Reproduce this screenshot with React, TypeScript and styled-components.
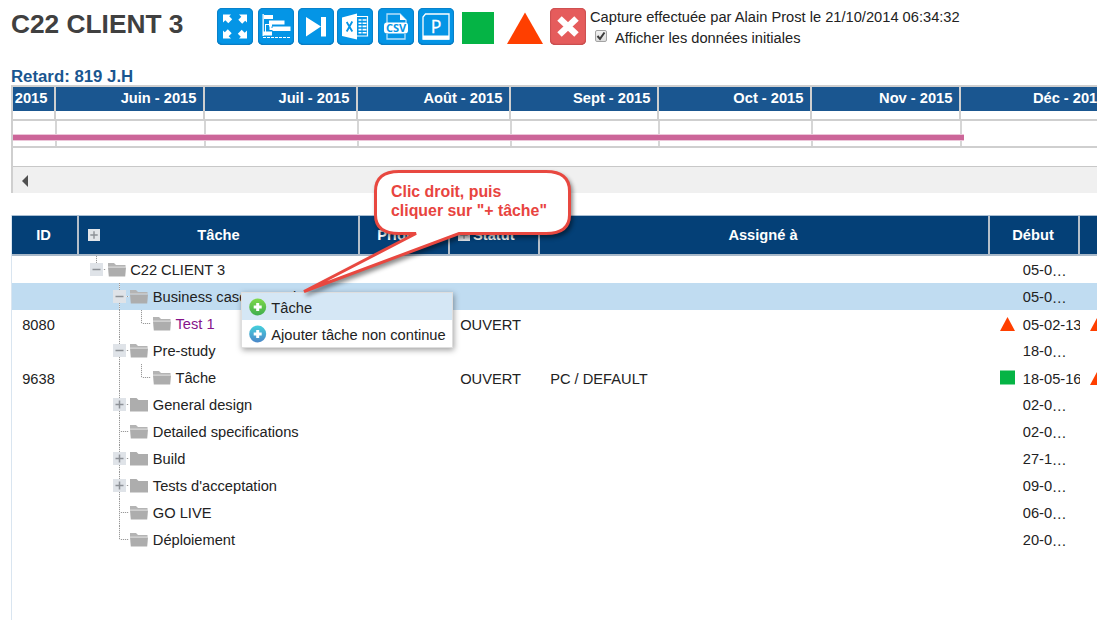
import React from 'react';
import styled, { createGlobalStyle, css } from 'styled-components';

const Global = createGlobalStyle`
  * { box-sizing: border-box; }
  html, body { margin: 0; background: #fff; overflow: hidden; }
  body { font: 14.67px "Liberation Sans", Arial, sans-serif; color: #222; }
`;

const Page = styled.main`
  position: relative;
  width: 1097px;
  height: 620px;
  overflow: hidden;
  padding-left: 11px;
`;

/* ---------- top bar ---------- */
const TopBar = styled.header`
  display: flex;
  height: 66px;
  padding-top: 8px;
`;
const Title = styled.h1`
  margin: 0;
  width: 206px;
  font-size: 26.3px;
  line-height: 32px;
  color: #404040;
  white-space: nowrap;
`;
const Toolbar = styled.div`
  display: flex;
`;
const ToolButton = styled.div<{ $gap?: number; $red?: boolean }>`
  width: 36px;
  height: 37px;
  margin-right: ${(p) => p.$gap ?? 4}px;
  border-radius: 5px;
  background: ${(p) => (p.$red ? '#e55c5c' : '#0495e6')};
  box-shadow: inset 0 0 1px 1px ${(p) => (p.$red ? '#cd4f50' : '#0a80c8')}, inset 0 -1px 1px ${(p) => (p.$red ? '#b84748' : '#0a6cae')};
  svg { display: block; }
`;
const Flag = styled.svg<{ $gap: number }>`
  display: block;
  margin-right: ${(p) => p.$gap}px;
`;
const Capture = styled.div`
  margin-left: 4px;
  white-space: nowrap;
`;
const CaptureLine = styled.div`
  line-height: 18px;
`;
const CheckLine = styled.label`
  display: flex;
  margin: 2px 0 0 5px;
  line-height: 20px;
`;
const CheckBox = styled.span`
  width: 12px;
  height: 12px;
  margin: 2px 8px 0 0;
  border: 1px solid #a3a3a3;
  border-radius: 2px;
  background: linear-gradient(#f2f2f2, #dcdcdc);
  svg { display: block; }
`;

/* ---------- timeline ---------- */
const Delay = styled.div`
  height: 19px;
  font-size: 16.8px;
  font-weight: bold;
  line-height: 22px;
  color: #1a5690;
`;
const Timeline = styled.section`
  position: relative;
  width: 1086px;
  border-left: 2px solid #cfcfcf;
  border-top: 2px solid #cfcfcf;
`;
const Months = styled.div`
  display: flex;
  height: 34px;
  overflow: hidden;
  border-bottom: 2px solid #cfcfcf;
`;
const Month = styled.div<{ $w: number }>`
  flex: 0 0 ${(p) => p.$w}px;
  border-right: 2px solid #cfcfcf;
  span {
    display: block;
    height: 24px;
    padding-right: 6.6px;
    background: #1a5690;
    color: #fff;
    font-weight: bold;
    line-height: 23px;
    text-align: right;
    white-space: nowrap;
  }
`;
const Lane = styled.div`
  display: flex;
  height: 27px;
  padding-left: 1px;
  overflow: hidden;
  border-bottom: 2px solid #cfcfcf;
`;
const LaneCell = styled.div<{ $w: number }>`
  flex: 0 0 ${(p) => p.$w}px;
  border-right: 2px solid #d6d6d6;
`;
const DelayBar = styled.div`
  position: absolute;
  left: 0;
  top: 47px;
  width: 951px;
  height: 7px;
  border: solid #ecc6d9;
  border-width: 1px 0;
  background: #cc6699;
`;
const Spacer = styled.div`
  height: 18px;
`;
const ScrollTrack = styled.div`
  height: 27px;
  padding: 8px 0 0 9px;
  border-top: 1px solid #c8c8c8;
  background: #f0f0f0;
  svg { display: block; }
`;

/* ---------- task grid ---------- */
const Grid = styled.section`
  width: 1100px;
  height: 405px;
  margin-top: 22px;
  border-left: 1px solid #d9e5f0;
`;
const cols = css`
  display: grid;
  grid-template-columns: 67px 281px 90px 90px 450px 90px 90px;
`;
const HeadRow = styled.div`
  ${cols}
  height: 41px;
  border-top: 1px solid #a9bed2;
  border-bottom: 2px solid #a9b9c9;
  background: #044077;
`;
const HeadCell = styled.div<{ $start?: boolean; $wide?: boolean }>`
  position: relative;
  display: flex;
  align-items: center;
  justify-content: ${(p) => (p.$start ? 'flex-start' : 'center')};
  gap: 3px;
  padding: 0 ${(p) => (p.$wide ? 0 : 2)}px 0 ${(p) => (p.$start ? 8 : 0)}px;
  border-right: 2px solid #b4bfca;
  color: #fff;
  font-weight: bold;
`;
const HeadToggle = styled.span<{ $pinned?: boolean }>`
  width: 12px;
  height: 12px;
  background: #e2e5e9;
  ${(p) => p.$pinned && 'position: absolute; left: 9px; top: 13px;'}
  svg { display: block; }
`;
const Row = styled.div<{ $on?: boolean }>`
  ${cols}
  height: 27px;
  background: ${(p) => (p.$on ? '#c0dcf1' : '#fff')};
`;
const Cell = styled.div`
  padding: 1px 0 0 10.2px;
  line-height: 28px;
  white-space: nowrap;
  overflow: hidden;
`;
const TreeCell = styled.div`
  display: flex;
  padding-left: 6px;
  line-height: 27px;
  white-space: nowrap;
`;
const Gutter = styled.span<{ $up?: boolean; $down?: boolean; $branch?: boolean }>`
  position: relative;
  flex: 0 0 22.67px;
  &::before {
    content: '';
    position: absolute;
    left: 11px;
    width: 1px;
    top: 0;
    height: ${(p) => (p.$down ? 27 : p.$up ? 14 : 0)}px;
    background: repeating-linear-gradient(#999 0 1px, #eee 1px 2px);
  }
  &::after {
    content: '';
    position: absolute;
    left: 12px;
    width: ${(p) => (p.$branch ? 9 : 0)}px;
    top: 13px;
    height: 1px;
    background: repeating-linear-gradient(90deg, #eee 0 1px, #999 1px 2px);
  }
`;
const Toggle = styled.span`
  position: absolute;
  z-index: 1;
  left: 5px;
  top: 7px;
  width: 13px;
  height: 13px;
  background: #dfe3e8;
  svg { display: block; }
`;
const FolderBox = styled.span`
  flex: 0 0 22.5px;
  padding-top: 7px;
  svg { display: block; }
`;
const Name = styled.span<{ $visited?: boolean }>`
  padding-top: 1px;
  color: ${(p) => (p.$visited ? '#86148a' : '#222')};
`;
const DateCell = styled.div`
  display: flex;
  padding-left: 10px;
  line-height: 27px;
  white-space: nowrap;
  overflow: hidden;
`;
const DateFlag = styled.span`
  flex: 0 0 22.8px;
  padding-top: 6px;
  svg { display: block; }
`;
const DateText = styled.span<{ $full?: boolean }>`
  padding-top: ${(p) => (p.$full ? 2 : 1)}px;
`;
const Dots = styled.span`
  position: relative;
  top: 1px;
  font-family: "Liberation Serif", serif;
  font-size: 14px;
  line-height: 1;
`;

/* ---------- overlays ---------- */
const Menu = styled.div`
  position: absolute;
  left: 241px;
  top: 292px;
  width: 212px;
  height: 56px;
  border: 1px solid #dedede;
  background: #fff;
  box-shadow: 1px 2px 6px rgba(0, 0, 0, 0.38);
`;
const MenuItem = styled.div<{ $on?: boolean }>`
  display: flex;
  height: 27px;
  padding-left: 7px;
  background: ${(p) => (p.$on ? '#d5e7f5' : '#fff')};
  line-height: 30px;
  white-space: nowrap;
  svg { flex: 0 0 18px; margin: 5px 4.3px 0 0; }
`;
const Callout = styled.div`
  position: absolute;
  left: 295px;
  top: 163px;
  width: 290px;
  height: 140px;
`;
const Bubble = styled.svg`
  position: absolute;
  left: 0;
  top: 0;
  filter: drop-shadow(2px 3px 2px rgba(0, 0, 0, 0.45));
`;
const CalloutText = styled.p`
  position: relative;
  margin: 0;
  padding: 19px 0 0 96px;
  color: #e84440;
  font-size: 15.9px;
  font-weight: bold;
  line-height: 19px;
  white-space: nowrap;
`;

const Plus = ({ size, minus }: { size: number; minus?: boolean }) => (
  <svg width={size} height={size} viewBox="0 0 13 13">
    <path d={minus ? 'M2.5 6.5h8' : 'M2.5 6.5h8M6.5 2.5v8'} stroke="#8d9197" strokeWidth="1.5" />
  </svg>
);
const Folder = ({ open }: { open?: boolean }) => (
  <svg width="18" height="14" viewBox="0 0 18 14">
    {open ? (
      <>
        <path d="M0 0h6l2 2h9.5v2H0z" fill="#b4b4b4" />
        <path d="M0 3.6h17.5v.9H0z" fill="#e2e2e2" />
        <path d="M0 4.5h18l-.8 9H.8z" fill="#adadad" />
      </>
    ) : (
      <path d="M0 0h6.5l2 2H18v11.5H0z" fill="#adadad" />
    )}
  </svg>
);
const StatusMark = ({ kind }: { kind: 'late' | 'ok' }) => (
  <svg width="15" height="16" viewBox="0 0 15 16">
    {kind === 'late' ? <path d="M7.5 1 15 15H0z" fill="#ff3f00" /> : <path d="M0 .5h15v14H0z" fill="#05b445" />}
  </svg>
);

const ExpandIcon = () => (
  <svg width="36" height="37" viewBox="0 0 36 37" fill="#fff">
    {[0, 90, 180, 270].map((a) => (
      <path key={a} transform={`rotate(${a} 18 18.5)`} d="M6 6.5h8l-1.8 1.8 3 3-3.9 3.9-3-3L6 14.5z" />
    ))}
  </svg>
);
const GanttIcon = () => (
  <svg width="36" height="37" viewBox="0 0 36 37" fill="#fff">
    <path d="M4.5 6h1.3v22H4.5zM6 7h9v4H6zM11 12.5h15.500v4H14v2h-3zM14.500 18.500h18V23h-18zM5.800 23.500H14v4H5.800z" />
    <path d="M7.5 16v8M7.5 16.5h4" stroke="#fff" fill="none" />
    <path d="M12.500 16v5h3" stroke="#fff" strokeWidth="2" fill="none" />
    <path d="M5 29.5h28" stroke="#fff" strokeWidth="1.2" strokeDasharray="3 1" />
  </svg>
);
const NextIcon = () => (
  <svg width="36" height="37" viewBox="0 0 36 37" fill="#fff">
    <path d="M8 9l15 9.5L8 28.5zM23 9h5v19.5h-5z" />
  </svg>
);
const ExcelIcon = () => (
  <svg width="36" height="37" viewBox="0 0 36 37">
    <path d="M5 9.5 20 5.5v26L5 28z" fill="#fff" />
    <path d="M20 8.500h10.500v19.500H20" fill="none" stroke="#fff" strokeWidth="1.2" />
    <path d="M21.500 12h8M21.500 15.200h8M21.500 18.400h8M21.500 21.600h8M21.500 24.800h8" stroke="#fff" strokeWidth="1.6" />
    <path d="M25 10v16" stroke="#0495e6" />
    <path d="M9.700 14l5.600 9.500M15.300 13.500l-5.600 10" stroke="#0495e6" strokeWidth="1.8" />
  </svg>
);
const CsvIcon = () => (
  <svg width="36" height="37" viewBox="0 0 36 37">
    <path d="M9 15V6h13l6 6v3M9 26v5h18v-5" fill="none" stroke="#b7e0fa" strokeWidth="1.3" />
    <path d="M22 6v6h6z" fill="#fff" />
    <rect x="6" y="14.5" width="24" height="11" rx="3" fill="#fff" />
    <text x="18" y="24" textAnchor="middle" fontFamily="Open Sans, sans-serif" fontWeight="bold" fontSize="11" fill="#0495e6">CSV</text>
  </svg>
);
const ParkIcon = () => (
  <svg width="36" height="37" viewBox="0 0 36 37">
    <path d="M7.5 6H31v25H5V9z" fill="none" stroke="#fff" strokeWidth="1.3" />
    <path d="M5 27.5h26v4H5z" fill="#fff" />
    <text x="18" y="24.5" textAnchor="middle" fontFamily="Open Sans, sans-serif" fontSize="17.5" fill="#fff" stroke="#fff" strokeWidth=".3">P</text>
  </svg>
);
const CloseIcon = () => (
  <svg width="36" height="37" viewBox="0 0 36 37">
    <path d="M9.5 10.5l17 16M26.5 10.5l-17 16" stroke="#fff" strokeWidth="6.5" />
  </svg>
);
const AddIcon = ({ top, bottom, id }: { top: string; bottom: string; id: string }) => (
  <svg width="18" height="18" viewBox="0 0 18 18">
    <linearGradient id={id} x2="0" y2="1">
      <stop stopColor={top} />
      <stop offset="1" stopColor={bottom} />
    </linearGradient>
    <circle cx="8.7" cy="9" r="8.5" fill={`url(#${id})`} />
    <path d="M8.7 5v8M4.7 9h8" stroke="#fff" strokeWidth="3" />
  </svg>
);

const months: [string, number][] = [
  ['2015', 43], ['Juin - 2015', 149], ['Juil - 2015', 153], ['Août - 2015', 153], ['Sept - 2015', 148],
  ['Oct - 2015', 153], ['Nov - 2015', 149], ['Déc - 2015', 153],
];

type Task = {
  name: string; level: number; date: string; id?: string; toggle?: 'plus' | 'minus'; last?: boolean;
  closed?: boolean; on?: boolean; visited?: boolean; status?: string; who?: string; flag?: 'late' | 'ok';
};
const tasks: Task[] = [
  { name: 'C22 CLIENT 3', level: 0, date: '05-0', toggle: 'minus', last: true },
  { name: 'Business case - Paysl', level: 1, date: '05-0', toggle: 'minus', on: true },
  { name: 'Test 1', level: 2, date: '05-02-13', id: '8080', last: true, visited: true, status: 'OUVERT', flag: 'late' },
  { name: 'Pre-study', level: 1, date: '18-0', toggle: 'minus' },
  { name: 'Tâche', level: 2, date: '18-05-16', id: '9638', last: true, status: 'OUVERT', who: 'PC / DEFAULT', flag: 'ok' },
  { name: 'General design', level: 1, date: '02-0', toggle: 'plus', closed: true },
  { name: 'Detailed specifications', level: 1, date: '02-0' },
  { name: 'Build', level: 1, date: '27-1', toggle: 'plus', closed: true },
  { name: "Tests d'acceptation", level: 1, date: '09-0', toggle: 'plus', closed: true },
  { name: 'GO LIVE', level: 1, date: '06-0' },
  { name: 'Déploiement', level: 1, date: '20-0', last: true },
];

const TaskRow = ({ t }: { t: Task }) => (
  <Row $on={t.on}>
    <Cell>{t.id}</Cell>
    <TreeCell>
      {t.level > 0 && <Gutter />}
      {t.level > 1 && <Gutter $down />}
      <Gutter $up $down={!t.last} $branch>
        {t.toggle && <Toggle><Plus size={13} minus={t.toggle === 'minus'} /></Toggle>}
      </Gutter>
      <FolderBox><Folder open={!t.closed} /></FolderBox>
      <Name $visited={t.visited}>{t.name}</Name>
    </TreeCell>
    <Cell />
    <Cell>{t.status}</Cell>
    <Cell>{t.who}</Cell>
    <DateCell>
      <DateFlag>{t.flag && <StatusMark kind={t.flag} />}</DateFlag>
      <DateText $full={!!t.flag}>{t.date}{!t.flag && <Dots>…</Dots>}</DateText>
    </DateCell>
    <DateCell>
      <DateFlag>{t.flag && <StatusMark kind="late" />}</DateFlag>
    </DateCell>
  </Row>
);

export default function App() {
  return (
    <Page>
      <Global />
      <TopBar>
        <Title>C22 CLIENT 3</Title>
        <Toolbar>
          <ToolButton $gap={4.5}><ExpandIcon /></ToolButton>
          <ToolButton $gap={4.5}><GanttIcon /></ToolButton>
          <ToolButton $gap={3}><NextIcon /></ToolButton>
          <ToolButton $gap={5}><ExcelIcon /></ToolButton>
          <ToolButton $gap={4}><CsvIcon /></ToolButton>
          <ToolButton $gap={8}><ParkIcon /></ToolButton>
          <Flag $gap={13} width="32" height="37"><path d="M0 4h32v32H0z" fill="#05b445" /></Flag>
          <Flag $gap={7} width="36" height="37"><path d="M18 4.5 36 36H0z" fill="#ff3f00" /></Flag>
          <ToolButton $gap={0} $red><CloseIcon /></ToolButton>
        </Toolbar>
        <Capture>
          <CaptureLine>Capture effectuée par Alain Prost le 21/10/2014 06:34:32</CaptureLine>
          <CheckLine>
            <CheckBox>
              <svg width="10" height="10" viewBox="0 0 10 10"><path d="M1.5 5l2.5 2.8L8.5 1.5" fill="none" stroke="#3c3c3c" strokeWidth="2" /></svg>
            </CheckBox>
            Afficher les données initiales
          </CheckLine>
        </Capture>
      </TopBar>

      <Delay>Retard: 819 J.H</Delay>
      <Timeline>
        <Months>
          {months.map(([m, w]) => <Month key={m} $w={w}><span>{m}</span></Month>)}
        </Months>
        <Lane>
          {months.slice(0, 7).map(([m, w]) => <LaneCell key={m} $w={w} />)}
        </Lane>
        <DelayBar />
        <Spacer />
        <ScrollTrack>
          <svg width="7" height="13"><path d="M6 0v12L0 6z" fill="#505050" /></svg>
        </ScrollTrack>
      </Timeline>

      <Grid>
        <HeadRow>
          <HeadCell>ID</HeadCell>
          <HeadCell $wide><HeadToggle $pinned><Plus size={12} /></HeadToggle>Tâche</HeadCell>
          <HeadCell>Priorité</HeadCell>
          <HeadCell $start><HeadToggle><Plus size={12} /></HeadToggle>Statut</HeadCell>
          <HeadCell>Assigné à</HeadCell>
          <HeadCell>Début</HeadCell>
          <HeadCell />
        </HeadRow>
        {tasks.map((t) => <TaskRow key={t.name} t={t} />)}
      </Grid>

      <Menu>
        <MenuItem $on><AddIcon id="add-green" top="#7fd94a" bottom="#3fae4e" />Tâche</MenuItem>
        <MenuItem><AddIcon id="add-blue" top="#45d0dc" bottom="#4a86c8" />Ajouter tâche non continue</MenuItem>
      </Menu>

      <Callout>
        <Bubble width="290" height="140">
          <path
            d="M104 8.5H251Q274.5 8.5 274.5 28V52Q274.5 70.5 251 70.5H164L9 128.5 121 70.5H104Q80.5 70.5 80.5 52V28Q80.5 8.5 104 8.5Z"
            fill="#fff" stroke="#e84840" strokeWidth="3"
          />
        </Bubble>
        <CalloutText>Clic droit, puis<br />cliquer sur "+ tâche"</CalloutText>
      </Callout>
    </Page>
  );
}
